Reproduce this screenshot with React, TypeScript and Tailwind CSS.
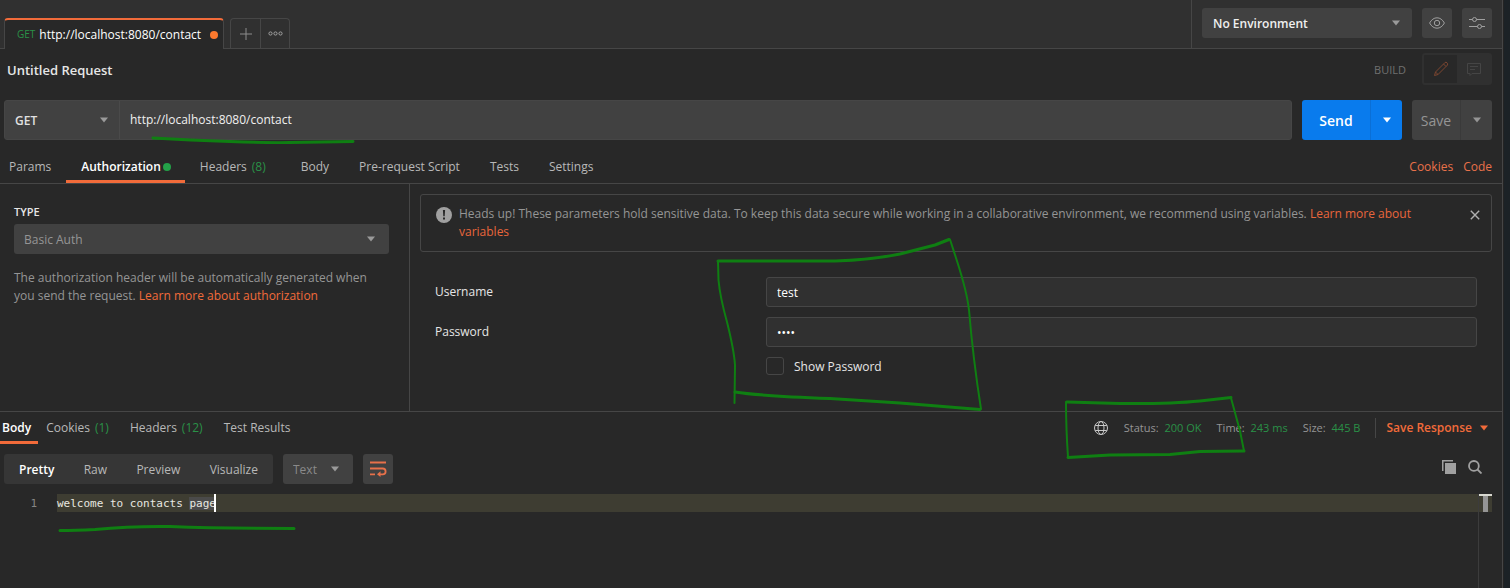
import React from "react";

const Caret = ({ className = "" }: { className?: string }) => (
  <svg width="8" height="6" viewBox="0 0 8 6" className={`shrink-0 ${className}`} fill="currentColor" aria-hidden="true">
    <path d="M0 .5h8L4 5.5z" />
  </svg>
);

type SelectBoxProps = { label: string; value: string; boxClass: string; selectClass: string; caretClass: string };

const SelectBox = ({ label, value, boxClass, selectClass, caretClass }: SelectBoxProps) => (
  <div className={`relative flex items-center ${boxClass}`}>
    <select aria-label={label} defaultValue={value} className={`h-full w-full appearance-none bg-transparent outline-none ${selectClass}`}>
      <option>{value}</option>
    </select>
    <Caret className={`pointer-events-none absolute ${caretClass}`} />
  </div>
);

const Count = ({ children }: { children: React.ReactNode }) => <span className="ml-[5px] text-[#2a9147]">{children}</span>;

const Stat = ({ label, value }: { label: string; value: string }) => (
  <span className="mr-[15px]">
    {label}: <span className="ml-[3px] text-[#2a9147]">{value}</span>
  </span>
);

function TopBar() {
  return (
    <header className="flex h-[49px] bg-[#303030]">
      <div className="flex min-w-0 flex-1 items-end">
        <div className="h-full w-1 border-b border-[#464646]" />
        <div className="flex h-[31px] w-[220px] items-center rounded-t-sm border-x border-t-2 border-x-[#464646] border-t-[#f26b3a] bg-[#282828] pr-[5px] pl-3">
          <span className="mr-1 text-[10px] text-[#2a9147]">GET</span>
          <span className="flex-1 text-xs text-white">http://localhost:8080/contact</span>
          <span className="size-2 rounded-full bg-[#fd7a2e]" />
        </div>
        <div className="flex h-full flex-1 items-end border-b border-[#464646] pl-1.5">
          <div className="flex h-[30px] rounded-t-sm border border-b-0 border-[#464646]">
            <button aria-label="New tab" className="flex w-[30px] items-center justify-center border-r border-[#464646] text-[#8c8c8c]">
              <svg width="12" height="12" viewBox="0 0 12 12" stroke="currentColor"><path d="M6 0v12M0 6h12" /></svg>
            </button>
            <button aria-label="Tab options" className="flex w-7 items-center justify-center text-[#a0a0a0]">
              <svg width="15" height="5" viewBox="0 0 15 5" fill="none" stroke="currentColor">
                <circle cx="2.5" cy="2.5" r="1.6" /><circle cx="7.5" cy="2.5" r="1.6" /><circle cx="12.5" cy="2.5" r="1.6" />
              </svg>
            </button>
          </div>
        </div>
      </div>
      <div className="flex items-start gap-2.5 border-b border-l border-[#464646] px-2.5 pt-2">
        <SelectBox label="Environment" value="No Environment" boxClass="h-[30px] w-[210px] rounded-[3px] bg-[#414141] text-[#9a9a9a]" selectClass="pl-[11px] pt-0.5 text-xs font-semibold text-[#f0f0f0]" caretClass="right-3" />
        <button aria-label="Environment quick look" className="flex size-[30px] items-center justify-center rounded-[3px] bg-[#414141] text-[#a0a0a0]">
          <svg width="16" height="12" viewBox="0 0 16 12" fill="none" stroke="currentColor">
            <path d="M.6 6C2.5 2.6 5 .8 8 .8S13.500 2.600 15.400 6C13.500 9.400 11 11.200 8 11.200S2.500 9.400.6 6z" />
            <circle cx="8" cy="6" r="2.700" />
          </svg>
        </button>
        <button aria-label="Manage environments" className="flex size-[30px] items-center justify-center rounded-[3px] bg-[#414141] text-[#a0a0a0]">
          <svg width="16" height="12" viewBox="0 0 16 12" fill="none" stroke="currentColor">
            <path d="M0 2.500h3.500M7.500 2.500H16M0 9.500h8.500M12.500 9.500H16" />
            <circle cx="5.500" cy="2.500" r="2" /><circle cx="10.500" cy="9.500" r="2" />
          </svg>
        </button>
      </div>
    </header>
  );
}

function RequestBar() {
  return (
    <>
      <div className="flex h-[51px] items-start justify-between pr-2.5 pl-[7px]">
        <h1 className="pt-3 text-[13px] leading-[18px] font-semibold text-[#e6e6e6]">Untitled Request</h1>
        <div className="flex items-center gap-4 pt-1">
          <span className="pt-0.5 text-[11px] text-[#707070]">BUILD</span>
          <div className="flex h-8 w-[70px] rounded-[3px] border-2 border-[#303030]">
            <button aria-label="Build mode" className="flex flex-1 items-center justify-center text-[#7c4630]">
              <svg width="16" height="16" viewBox="0 0 16 16" fill="none" stroke="currentColor"><path d="M1.500 14.500l1-3.500L12 1.500Q13 .8 14 1.800T14.500 4L5 13.500zM10.500 3l2.500 2.500M2.500 11L5 13.500" /></svg>
            </button>
            <button aria-label="Comments" className="flex flex-1 items-center justify-center bg-[#303030] text-[#454545]">
              <svg width="14" height="14" viewBox="0 0 14 14" fill="none" stroke="currentColor"><path d="M.5 1.500h13v10H5l-2 2v-2H.5zM3 4.500h8M3 7.500h5" /></svg>
            </button>
          </div>
        </div>
      </div>
      <div className="flex h-10 pr-2.5 pl-1">
        <div className="flex min-w-0 flex-1 rounded-[3px] border border-[#464646] bg-[#414141]">
          <SelectBox label="Method" value="GET" boxClass="w-[115px] border-r border-[#4a4a4a] text-[#9a9a9a]" selectClass="pl-2.5 pt-0.5 text-xs font-semibold text-[#e0e0e0]" caretClass="right-[11px]" />
          <input aria-label="Request URL" defaultValue="http://localhost:8080/contact" className="min-w-0 flex-1 bg-transparent px-2.5 text-xs text-[#f0f0f0] outline-none" />
        </div>
        <div className="ml-2.5 flex w-[100px] rounded-[3px] bg-[#097bed] text-white">
          <button className="flex-1 border-r border-[#0a6fd6] pt-0.5 text-sm font-semibold">Send</button>
          <button aria-label="Send options" className="flex w-[31px] items-center justify-center"><Caret /></button>
        </div>
        <div className="ml-2.5 flex w-20 rounded-[3px] bg-[#414141] text-[#959595]">
          <button className="flex-1 border-r border-[#3a3a3a] pt-0.5 text-sm">Save</button>
          <button aria-label="Save options" className="flex w-[31px] items-center justify-center"><Caret /></button>
        </div>
      </div>
    </>
  );
}

function RequestTabs() {
  const tab = "flex items-center px-[15px]";
  return (
    <div className="flex h-11 items-stretch justify-between border-b border-[#464646] pt-2.5 pr-2.5 text-xs text-[#b8b8b8]">
      <nav className="flex">
        <button className="pr-[15px] pl-[9px]">Params</button>
        <button className="flex items-center border-b-[3px] border-[#f26b3a] pt-[3px] pr-3.5 pl-[15px] font-semibold text-white">
          Authorization<span className="ml-0.5 size-2 rounded-full bg-[#24a148]" />
        </button>
        <button className={tab}>Headers<Count>(8)</Count></button>
        <button className="flex items-center pr-[15px] pl-5">Body</button>
        <button className={tab}>Pre-request Script</button>
        <button className={tab}>Tests</button>
        <button className={tab}>Settings</button>
      </nav>
      <div className="flex items-center gap-2.5 text-[#e8714a]">
        <a href="#cookies">Cookies</a>
        <a href="#code">Code</a>
      </div>
    </div>
  );
}

function Authorization() {
  const field = "h-[30px] w-full rounded-[3px] border border-[#464646] bg-[#303030] px-2.5 text-xs text-white outline-none";
  return (
    <div className="flex h-[228px] border-b border-[#464646] text-xs">
      <section className="w-[410px] shrink-0 border-r border-[#464646] px-3.5 pt-5 pr-5">
        <h2 className="text-[11px] leading-4 font-semibold text-[#e6e6e6]">TYPE</h2>
        <SelectBox label="Authorization type" value="Basic Auth" boxClass="mt-1 h-[30px] rounded-[3px] bg-[#414141] text-[#9a9a9a]" selectClass="pl-2.5 pt-0.5 text-xs text-[#959595]" caretClass="right-3.5" />
        <p className="mt-[15px] leading-[18px] text-[#959595]">
          The authorization header will be automatically generated when you send the request.{" "}
          <a href="#authorization" className="text-[#f26b3a]">Learn more about authorization</a>
        </p>
      </section>
      <section className="min-w-0 flex-1 px-2.5 pt-2.5">
        <div className="flex items-start rounded-[3px] border border-[#464646] px-[15px] py-2.5">
          <svg width="16" height="16" viewBox="0 0 16 16" className="mt-0.5 shrink-0" aria-hidden="true">
            <circle cx="8" cy="8" r="8" fill="#a0a0a0" />
            <path d="M6.900 3h2.200l-.4 6.200H7.300zM7 10.600h2v2H7z" fill="#282828" />
          </svg>
          <p className="ml-[7px] min-w-0 flex-1 pr-9 leading-[18px] text-[#959595]">
            Heads up! These parameters hold sensitive data. To keep this data secure while working in a collaborative environment, we recommend using variables.{" "}
            <a href="#variables" className="text-[#e8663c]">Learn more about variables</a>
          </p>
          <button aria-label="Dismiss" className="-mr-1 pt-[5px] text-[#b0b0b0]">
            <svg width="10" height="10" viewBox="0 0 10 10" stroke="currentColor" strokeWidth="1.400"><path d="M.8.8l8.400 8.400M9.200.8L.8 9.200" /></svg>
          </button>
        </div>
        <form className="mt-[25px] grid grid-cols-[331px_1fr] items-center gap-y-2.5 px-[15px] text-[#e6e6e6]">
          <label htmlFor="username">Username</label>
          <input id="username" defaultValue="test" className={field} />
          <label htmlFor="password">Password</label>
          <input id="password" type="password" defaultValue="test" className={field} />
          <label className="col-start-2 flex items-center gap-2.5">
            <input type="checkbox" className="size-[18px] appearance-none rounded-[3px] border border-[#464646]" />
            <span className="pt-0.5">Show Password</span>
          </label>
        </form>
      </section>
    </div>
  );
}

function Response() {
  return (
    <section className="flex flex-1 flex-col text-xs text-[#b8b8b8]">
      <div className="flex h-8 items-stretch justify-between pr-3.5">
        <nav className="flex">
          <button className="border-b-[3px] border-[#f26b3a] pt-[3px] pr-[7px] pl-0.5 font-semibold text-white">Body</button>
          <button className="px-2">Cookies<Count>(1)</Count></button>
          <button className="px-[13px]">Headers<Count>(12)</Count></button>
          <button className="px-2">Test Results</button>
        </nav>
        <div className="flex items-center text-[11px] text-[#959595]">
          <svg width="14" height="14" viewBox="0 0 14 14" fill="none" stroke="#c8c8c8" className="mr-4" aria-hidden="true">
            <circle cx="7" cy="7" r="6.500" /><ellipse cx="7" cy="7" rx="3" ry="6.500" /><path d="M1.200 4.500h11.600M1.200 9.500h11.600" />
          </svg>
          <Stat label="Status" value="200 OK" />
          <Stat label="Time" value="243 ms" />
          <Stat label="Size" value="445 B" />
          <button className="flex h-5 items-center gap-2 border-l border-[#464646] pl-2.5 text-xs font-semibold text-[#f26b3a]">
            Save Response <Caret />
          </button>
        </div>
      </div>
      <div className="mt-2.5 flex h-[30px] items-center pr-5 pl-1">
        <div className="flex h-full w-[269px] items-center justify-between rounded-[3px] bg-[#363636] px-[15px] pt-0.5">
          <button className="font-semibold text-white">Pretty</button>
          <button>Raw</button>
          <button>Preview</button>
          <button>Visualize</button>
        </div>
        <SelectBox label="Format" value="Text" boxClass="ml-2.5 h-full w-[70px] rounded-[3px] bg-[#414141] text-[#9a9a9a]" selectClass="pl-2.5 pt-0.5 text-xs text-[#8a8a8a]" caretClass="right-3.5" />
        <button aria-label="Wrap lines" className="ml-2.5 flex size-[30px] items-center justify-center rounded-[3px] bg-[#414141] text-[#e8714a]">
          <svg width="18" height="16" viewBox="0 0 18 16" fill="none" stroke="currentColor" strokeWidth="1.800">
            <path d="M1 1.500h16M1 7.500h12.700a2.900 2.900 0 010 5.800H10M1 13.300h5" /><path d="M11.500 10.300L8 13.300l3.500 2.700z" fill="currentColor" stroke="none" />
          </svg>
        </button>
        <div className="ml-auto flex gap-3 pb-1 text-[#a0a0a0]">
          <button aria-label="Copy"><svg width="14" height="14" viewBox="0 0 14 14" fill="currentColor"><path d="M0 0h11v1.500H1.500V11H0zM3 3h11v11H3z" /></svg></button>
          <button aria-label="Search"><svg width="14" height="14" viewBox="0 0 14 14" fill="none" stroke="currentColor" strokeWidth="1.800"><circle cx="5.900" cy="5.900" r="4.900" /><path d="M9.500 9.500l4 4" /></svg></button>
        </div>
      </div>
      <div className="mt-2.5 flex flex-1 pr-2.5 font-['DejaVu_Sans_Mono',monospace] text-[11px] leading-5">
        <span className="w-[57px] pr-5 text-right text-[#858585]">1</span>
        <div className="flex-1">
          <div className="flex h-[18px] bg-[#3e3d32] text-[#e8e8e0]">
            <pre className="font-['DejaVu_Sans_Mono',monospace]">welcome to contacts <span className="bg-[#4a4a4a]">page</span></pre>
            <span className="-ml-0.5 w-0.5 bg-white" />
          </div>
        </div>
        <div className="w-3.5 border-l border-[#3c3c3c]">
          <div className="flex h-[18px] flex-col items-center border-t-2 border-[#d8d8d0] bg-[#3e3d32]"><span className="w-[5px] flex-1 bg-[#959595]" /></div>
        </div>
      </div>
    </section>
  );
}

const Annotations = () => (
  <svg className="pointer-events-none absolute top-0 left-0" width="1510" height="588" viewBox="0 0 1510 588" fill="none" stroke="#0f7f12" strokeLinecap="round" strokeLinejoin="round" aria-hidden="true">
    <path strokeWidth="3" d="M153 138Q190 140 230 141.500T290 142.500L353 141.500" />
    <path strokeWidth="3" d="M718 261L835 261Q870 260 900 254L935 245L949 239.500M735 392Q760 396 830 398.500L900 403L980 409.500" />
    <path strokeWidth="2" d="M718 261L718.500 280Q720 297 727 322Q734 350 735 365L734.500 403M950 239.500L957 261Q967 292 969 310Q973 358 981 409" />
    <path strokeWidth="3" d="M1067 402L1120 403.500Q1170 404 1200 401L1231 397.500M1068 457.500L1110 455L1170 454.500L1200 451.500L1244 451" />
    <path strokeWidth="2" d="M1066 402Q1066 428 1068 457M1231 398L1240 431L1244 451" />
    <path strokeWidth="3" d="M60 530.500Q75 530.500 95 529.500Q130 526 170 526.500Q220 528.500 294 528.500" />
  </svg>
);

export default function App() {
  return (
    <div className="relative flex min-h-screen bg-[#282828] font-['Open_Sans',sans-serif]">
      <main className="flex min-w-0 flex-1 flex-col border-r border-[#464646]">
        <TopBar />
        <RequestBar />
        <RequestTabs />
        <Authorization />
        <Response />
      </main>
      <aside className="w-[7px] border-l border-[#242424] bg-[#1c2226]" />
      <Annotations />
    </div>
  );
}
